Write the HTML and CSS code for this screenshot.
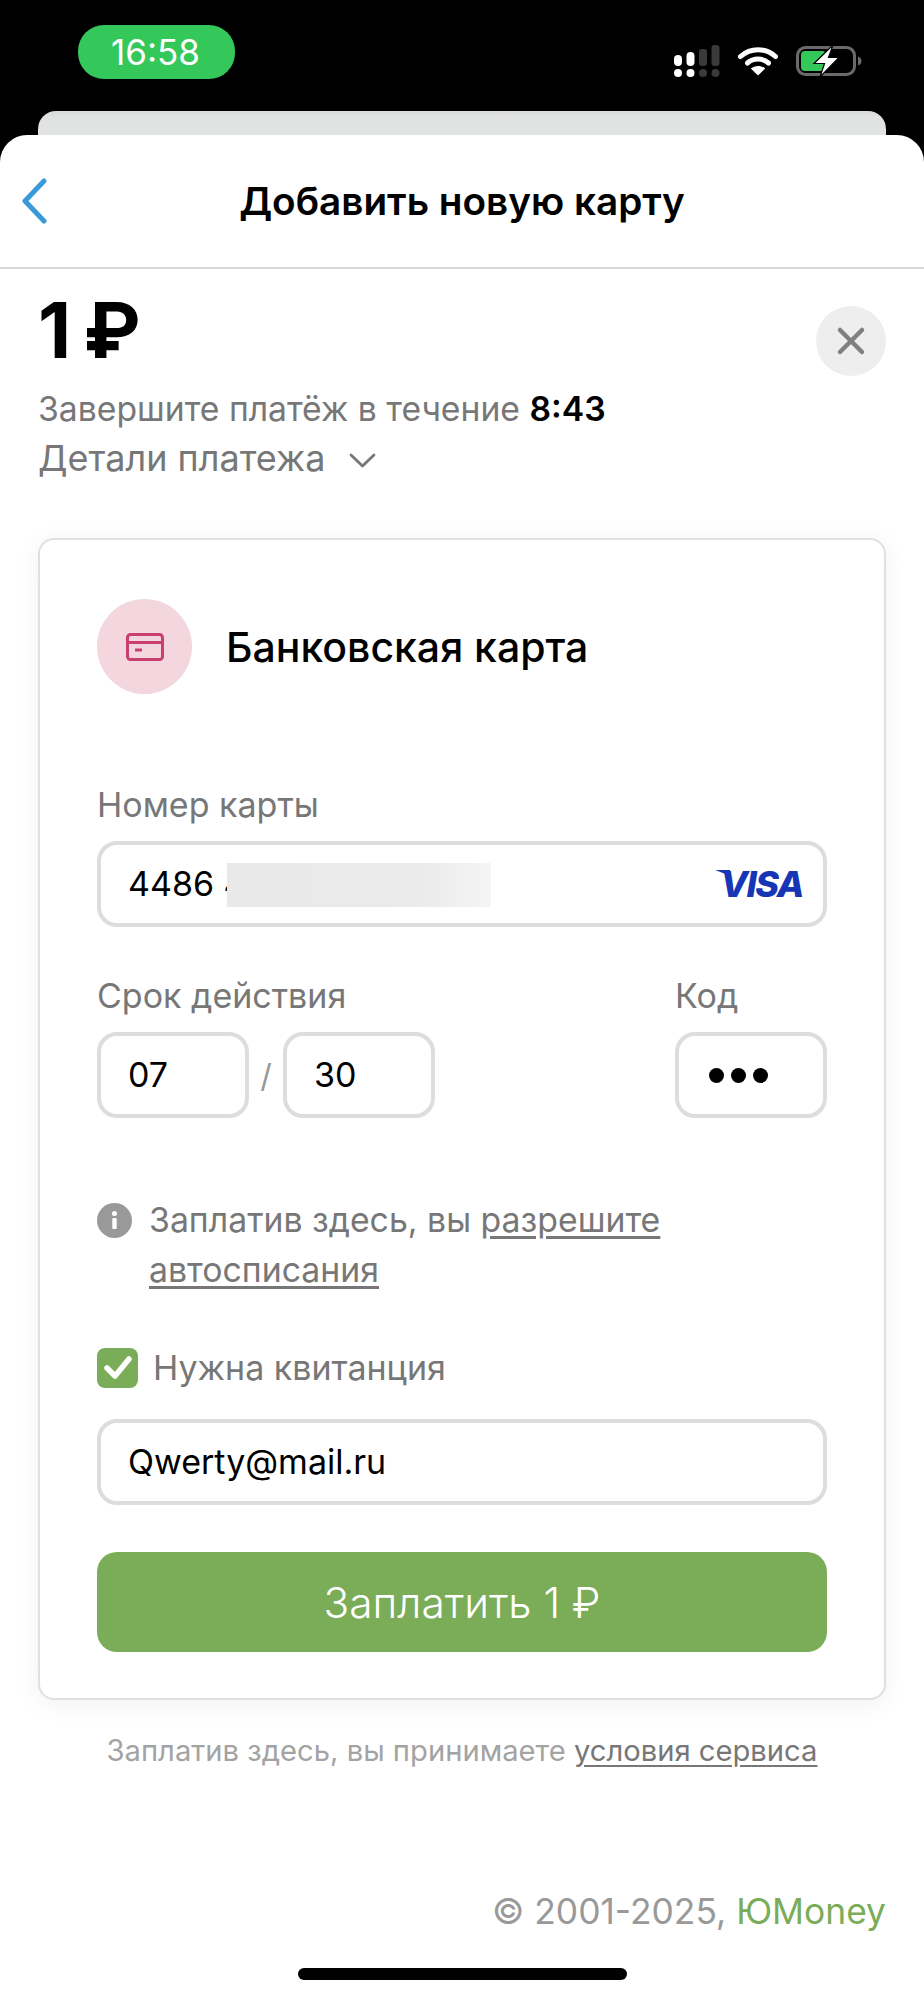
FILE: index.html
```html
<!DOCTYPE html>
<html lang="ru">
<head>
<meta charset="utf-8">
<title>Добавить новую карту</title>
<link rel="stylesheet" href="styles.css">
</head>
<body>
<div class="status">
  <div class="time">16:58</div>
  <div class="status-icons">
    <svg class="signal" width="46" height="32" viewBox="0 0 46 32">
      <rect x="0" y="10" width="8" height="11" rx="4" fill="#fff"/><rect x="12.500" y="7" width="8" height="14" rx="4" fill="#fff"/>
      <rect x="25" y="4" width="8" height="17" rx="3" fill="#3a3a3a"/><rect x="37.500" y="0" width="8" height="21" rx="3" fill="#3a3a3a"/>
      <circle cx="4" cy="28" r="4" fill="#fff"/><circle cx="16.500" cy="28" r="4" fill="#fff"/>
      <circle cx="29" cy="28" r="4" fill="#3a3a3a"/><circle cx="41.500" cy="28" r="4" fill="#3a3a3a"/>
    </svg>
    <svg class="wifi" width="40" height="30" viewBox="0 0 40 30">
      <path d="M2.500 10.500C12.500 1.500 27.500 1.500 37.500 10.500" fill="none" stroke="#fff" stroke-width="5" stroke-linecap="round"/>
      <path d="M9.500 17C15.500 11.800 24.500 11.800 30.500 17" fill="none" stroke="#fff" stroke-width="5" stroke-linecap="round"/>
      <path d="M12.800 22.500C17 19 23 19 27.200 22.500L20 29.500Z" fill="#fff"/>
    </svg>
    <svg class="battery" width="66" height="32" viewBox="0 0 66 32">
      <rect x="1.500" y="2.500" width="57" height="27" rx="8" fill="none" stroke="#6a6a6a" stroke-width="3"/>
      <rect x="5" y="6" width="25" height="20" rx="4" fill="#34c759"/>
      <path d="M62 11.500C64.500 12.500 65.500 14 65.500 16C65.500 18 64.500 19.500 62 20.500Z" fill="#6a6a6a"/>
      <path d="M37 0L18 18.500H28.500L24 32L43 12.500H32.500Z" fill="#fff" stroke="#000" stroke-width="1.200"/>
    </svg>
  </div>
</div>
<div class="peek"></div>
<main class="sheet">
  <header class="topbar">
    <svg class="back" width="26" height="46" viewBox="0 0 26 46">
      <path d="M23 3L4 23L23 43" fill="none" stroke="#3a9ad9" stroke-width="5" stroke-linecap="round" stroke-linejoin="round"/>
    </svg>
    <h1 class="title">Добавить новую карту</h1>
    <span class="topbar-end"></span>
  </header>
  <div class="content">
    <div class="summary">
      <div class="amount">1 ₽</div>
      <div class="close">
        <svg width="30" height="30" viewBox="0 0 30 30">
          <path d="M4 4L26 26M26 4L4 26" fill="none" stroke="#808080" stroke-width="4.500" stroke-linecap="round"/>
        </svg>
      </div>
    </div>
    <div class="timer">Завершите платёж в течение <b class="timer-value">8:43</b></div>
    <div class="details">Детали платежа
      <svg class="details-chevron" width="27" height="15" viewBox="0 0 27 15">
        <path d="M2 2L13.500 13L25 2" fill="none" stroke="#777" stroke-width="2.800" stroke-linecap="round" stroke-linejoin="round"/>
      </svg>
    </div>
    <section class="card">
      <div class="card-head">
        <div class="card-badge">
          <svg width="38" height="28" viewBox="0 0 38 28">
            <rect x="1.500" y="1.500" width="35" height="25" rx="3" fill="none" stroke="#c93f6f" stroke-width="3"/>
            <path d="M2 9.500H36" stroke="#c93f6f" stroke-width="3"/>
            <rect x="9" y="15.500" width="7" height="3" fill="#c93f6f"/>
          </svg>
        </div>
        <div class="card-name">Банковская карта</div>
      </div>
      <div class="label number-label">Номер карты</div>
      <div class="field">
        <span>4486 4</span>
        <span class="mask"></span>
        <span class="visa">VISA</span>
      </div>
      <div class="expiry-row">
        <div>
          <div class="label">Срок действия</div>
          <div class="expiry">
            <div class="field small">07</div>
            <span class="slash">/</span>
            <div class="field small">30</div>
          </div>
        </div>
        <div>
          <div class="label">Код</div>
          <div class="field small code"><i class="dot"></i><i class="dot"></i><i class="dot"></i></div>
        </div>
      </div>
      <div class="info">
        <span class="info-icon">
          <svg width="35" height="35" viewBox="0 0 35 35">
            <circle cx="17.500" cy="17.500" r="17.500" fill="#999"/>
            <circle cx="17.500" cy="10.500" r="2.500" fill="#fff"/>
            <rect x="15.300" y="15" width="4.400" height="11" rx="1" fill="#fff"/>
          </svg>
        </span>
        <p class="info-text">Заплатив здесь, вы <a class="link">разрешите</a> <a class="link">автосписания</a></p>
      </div>
      <div class="receipt">
        <span class="checkbox">
          <svg width="30" height="26" viewBox="0 0 30 26">
            <path d="M4 13L12 21L26 4" fill="none" stroke="#fff" stroke-width="5.500" stroke-linecap="round" stroke-linejoin="round"/>
          </svg>
        </span>
        <span class="receipt-text">Нужна квитанция</span>
      </div>
      <div class="field email">Qwerty@mail.ru</div>
      <button class="pay">Заплатить 1 ₽</button>
    </section>
    <p class="terms">Заплатив здесь, вы принимаете <a class="terms-link">условия сервиса</a></p>
    <p class="copyright">© 2001-2025, <span class="brand">ЮMoney</span></p>
  </div>
  <div class="home-bar"></div>
</main>
</body>
</html>
```

FILE: styles.css
```css
* { box-sizing: border-box; }
html, body { margin: 0; padding: 0; }
body {
  width: 924px;
  height: 2000px;
  overflow: hidden;
  background: #000;
  font-family: Inter, "Noto Sans", sans-serif;
  color: #000;
}
.status {
  height: 111px;
  padding: 25px 62px 0 78px;
  display: flex;
  justify-content: space-between;
  align-items: flex-start;
}
.time {
  width: 157px;
  height: 54px;
  border-radius: 26px;
  background: #34c759;
  color: #fff;
  font-size: 35px;
  font-weight: 400;
  line-height: 54px;
  text-align: center;
  padding-right: 2px;
}
.status-icons {
  display: flex;
  align-items: center;
  gap: 18px;
  margin-top: 20px;
}
.peek {
  height: 24px;
  margin: 0 38px;
  border-radius: 18px 18px 0 0;
  background: linear-gradient(180deg, #d9d9d9 0, #e1e2e2 6px, #e1e2e2 100%);
}
.sheet {
  height: 1865px;
  background: #fff;
  border-radius: 27px 27px 0 0;
}
.topbar {
  height: 134px;
  border-bottom: 2px solid #d8d8d8;
  display: grid;
  grid-template-columns: 1fr auto 1fr;
  align-items: center;
  padding: 0 21px;
}
.back { display: block; margin-top: -1px; }
.title {
  margin: 0;
  font-size: 38.700px;
  line-height: 48px;
  font-weight: 600;
}
.content { padding: 0 38px; }
.summary {
  display: flex;
  justify-content: space-between;
  align-items: flex-start;
  padding-top: 22px;
}
.amount {
  font-size: 77px;
  line-height: 78px;
  font-weight: 700;
  word-spacing: -6px;
}
.close {
  width: 70px;
  height: 70px;
  margin-top: 15px;
  border-radius: 50%;
  background: #eee;
  display: flex;
  align-items: center;
  justify-content: center;
}
.timer, .details {
  line-height: 49px;
  color: #777;
}
.timer { margin-top: 8px; font-size: 33.700px; }
.timer-value { color: #000; font-weight: 600; }
.details { display: flex; align-items: center; gap: 24px; font-size: 36px; margin-top: 1px; }
.details-chevron { margin-top: 4px; }
.card {
  margin-top: 55px;
  height: 1162px;
  padding: 59px 57px 47px;
  border: 2px solid #e0e0e0;
  border-radius: 16px;
  box-shadow: 0 4px 26px rgba(0, 0, 0, 0.06);
  background: #fff;
}
.card-head { display: flex; align-items: center; gap: 34px; }
.card-badge {
  width: 95px;
  height: 95px;
  border-radius: 50%;
  background: #f4d6df;
  display: flex;
  align-items: center;
  justify-content: center;
}
.card-name {
  font-size: 41px;
  line-height: 48px;
  font-weight: 500;
}
.label {
  font-size: 34px;
  line-height: 40px;
  color: #777;
  margin-bottom: 16px;
}
.number-label { margin-top: 91px; }
.field {
  position: relative;
  height: 86px;
  border: 4px solid #ddd;
  border-radius: 20px;
  padding: 0 27px;
  display: flex;
  align-items: center;
  font-size: 34px;
  line-height: 78px;
  color: #000;
}
.mask {
  position: absolute;
  left: 126px;
  top: 18px;
  width: 264px;
  height: 44px;
  background: linear-gradient(90deg, #e9e9e9 0%, #ebebeb 75%, #f5f5f5 100%);
}
.visa {
  position: relative;
  margin-left: auto;
  margin-right: -7px;
  font-size: 36px;
  font-style: italic;
  font-weight: 800;
  letter-spacing: -1.500px;
  color: #1636b6;
}
.visa::before {
  content: "";
  position: absolute;
  left: -5px;
  top: 25px;
  width: 15px;
  height: 6px;
  background: #1636b6;
  clip-path: polygon(0 0, 100% 0, 100% 100%);
}
.expiry-row {
  display: flex;
  justify-content: space-between;
  margin-top: 49px;
}
.expiry { display: flex; align-items: center; }
.small { width: 152px; }
.slash {
  width: 34px;
  text-align: center;
  font-size: 32px;
  color: #999;
}
.code { gap: 7px; padding-left: 30px; }
.dot {
  width: 15px;
  height: 15px;
  border-radius: 50%;
  background: #000;
}
.info {
  display: flex;
  gap: 17px;
  margin-top: 77px;
}
.info-icon { margin-top: 8px; height: 35px; }
.info-text {
  margin: 0;
  width: 560px;
  font-size: 33.800px;
  line-height: 50px;
  color: #777;
}
.link { text-decoration: underline; text-underline-offset: 4px; }
.receipt {
  display: flex;
  align-items: center;
  gap: 15px;
  margin-top: 53px;
}
.checkbox {
  width: 41px;
  height: 40px;
  border-radius: 8px;
  background: #7bac58;
  display: flex;
  align-items: center;
  justify-content: center;
}
.receipt-text {
  font-size: 34px;
  line-height: 40px;
  color: #777;
}
.email { margin-top: 31px; }
.pay {
  display: block;
  width: 100%;
  height: 100px;
  margin-top: 47px;
  border: 0;
  border-radius: 20px;
  background: #7bac58;
  color: #fff;
  font-family: inherit;
  font-size: 42.500px;
  font-weight: 300;
}
.terms {
  margin: 31px 0 0;
  font-size: 29.200px;
  line-height: 40px;
  text-align: center;
  color: #a3a3a3;
}
.terms-link { color: #777; text-decoration: underline; text-underline-offset: 4px; }
.copyright {
  margin: 119px 0 0;
  font-size: 35.400px;
  line-height: 44px;
  text-align: right;
  color: #999;
}
.brand { color: #7bac58; }
.home-bar {
  width: 329px;
  height: 12px;
  margin: 34px auto 0;
  border-radius: 6px;
  background: #000;
}
```
